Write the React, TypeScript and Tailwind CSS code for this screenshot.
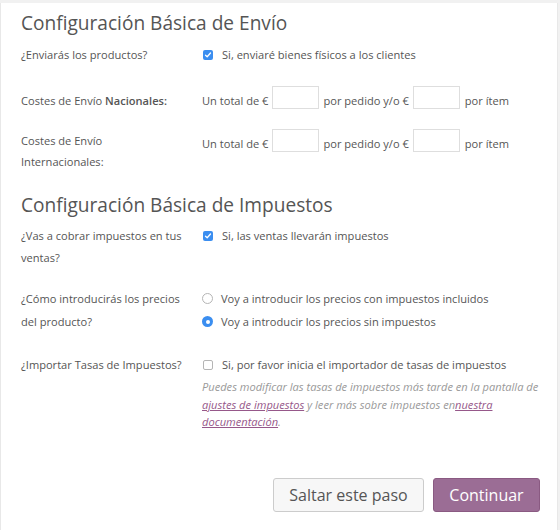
import React from "react";

const font = { fontFamily: '"Open Sans", "Liberation Sans", sans-serif' };

function Check({ checked }: { checked: boolean }) {
  if (checked) {
    return (
      <span className="inline-flex h-[10px] w-[10px] shrink-0 items-center justify-center rounded-[2px] bg-[#3b8ef0]">
        <svg width="8" height="8" viewBox="0 0 8 8">
          <path d="M1.5 4.2 L3.2 5.8 L6.5 2" stroke="white" strokeWidth="1.3" fill="none" strokeLinecap="round" strokeLinejoin="round" />
        </svg>
      </span>
    );
  }
  return <span className="inline-block h-[10px] w-[10px] shrink-0 rounded-[2px] border border-[#b5b5b5] bg-white" />;
}

function Radio({ checked }: { checked: boolean }) {
  if (checked) {
    return (
      <span className="inline-flex h-[11px] w-[11px] shrink-0 items-center justify-center rounded-full bg-[#3b8ef0]">
        <span className="h-[4px] w-[4px] rounded-full bg-white" />
      </span>
    );
  }
  return <span className="inline-block h-[11px] w-[11px] shrink-0 rounded-full border border-[#b5b5b5] bg-white" />;
}

function Input() {
  return <span className="inline-block h-[23px] w-[47px] border border-[#dedede] bg-white" />;
}

function CostRow() {
  return (
    <div className="flex items-center">
      <span>Un total de €</span>
      <span className="ml-[4px]"><Input /></span>
      <span className="ml-[4px]">por pedido y/o €</span>
      <span className="ml-[4px]"><Input /></span>
      <span className="ml-[5px]">por ítem</span>
    </div>
  );
}

export default function App() {
  return (
    <div className="min-h-[530px] w-[560px] bg-[#f1f1f1] pt-[3px]" style={font}>
      <div className="h-[527px] w-[558px] border-l border-r border-[#e8e8e8] bg-white text-[11.1px] text-[#555]">
        <h1 className="pl-[20px] pt-[6px] text-[19.1px] leading-[28px] text-[#555]">Configuración Básica de Envío</h1>

        <div className="mt-[7px] grid grid-cols-[181px_1fr] pl-[20px] leading-[22px]">
          <div>¿Enviarás los productos?</div>
          <div className="flex items-center gap-[9px] pl-[1px]">
            <Check checked />
            <span>Si, enviaré bienes físicos a los clientes</span>
          </div>
        </div>

        <div className="mt-[20px] grid grid-cols-[181px_1fr] items-center pl-[20px] leading-[22px]">
          <div>
            Costes de Envío <strong className="font-semibold">Nacionales:</strong>
          </div>
          <CostRow />
        </div>

        <div className="mt-[14px] grid grid-cols-[181px_1fr] pl-[20px] leading-[21px]">
          <div className="w-[120px]">Costes de Envío Internacionales:</div>
          <div className="-mt-[1px]"><CostRow /></div>
        </div>

        <h2 className="mt-[19px] pl-[20px] text-[19.1px] leading-[28px] text-[#555]">Configuración Básica de Impuestos</h2>

        <div className="mt-[6px] grid grid-cols-[181px_1fr] pl-[20px] leading-[22px]">
          <div className="w-[170px]">¿Vas a cobrar impuestos en tus ventas?</div>
          <div className="flex items-center gap-[9px] self-start pl-[1px]">
            <Check checked />
            <span>Si, las ventas llevarán impuestos</span>
          </div>
        </div>

        <div className="mt-[18px] grid grid-cols-[181px_1fr] pl-[20px] leading-[23px]">
          <div className="w-[170px]">¿Cómo introducirás los precios del producto?</div>
          <div className="flex flex-col">
            <div className="flex items-center gap-[8px]">
              <Radio checked={false} />
              <span>Voy a introducir los precios con impuestos incluidos</span>
            </div>
            <div className="flex items-center gap-[8px]">
              <Radio checked />
              <span>Voy a introducir los precios sin impuestos</span>
            </div>
          </div>
        </div>

        <div className="mt-[21px] grid grid-cols-[181px_1fr] pl-[20px] leading-[22px]">
          <div>¿Importar Tasas de Impuestos?</div>
          <div className="flex flex-col">
            <div className="flex items-center gap-[9px] pl-[1px]">
              <Check checked={false} />
              <span>Si, por favor inicia el importador de tasas de impuestos</span>
            </div>
            <p className="mt-[2px] pr-[12px] text-[11.1px] italic leading-[17.5px] text-[#999]">
              Puedes modificar las tasas de impuestos más tarde en la pantalla de{" "}
              <a className="text-[#96588a] underline">ajustes de impuestos</a> y leer más sobre impuestos en
              <a className="text-[#96588a] underline">nuestra documentación</a>.
            </p>
          </div>
        </div>

        <div className="mt-[47px] flex justify-end gap-[9px] pr-[17px]">
          <button className="h-[34px] w-[151px] rounded-[3px] border border-[#cccccc] bg-[#f7f7f7] text-[16px] text-[#555]">
            Saltar este paso
          </button>
          <button className="h-[34px] w-[107px] rounded-[3px] border border-[#8a5a82] bg-[#9b6d95] text-[16px] text-white">
            Continuar
          </button>
        </div>
      </div>
    </div>
  );
}
